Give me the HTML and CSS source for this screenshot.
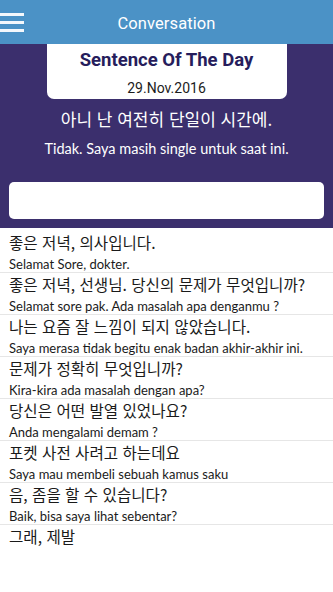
FILE: index.html
```html
<!DOCTYPE html>
<html lang="ko">
<head>
<meta charset="utf-8">
<title>Conversation</title>
<link rel="stylesheet" href="styles.css">
</head>
<body>
<header class="appbar">
  <button class="menu" aria-label="Menu"><span></span><span></span><span></span></button>
  <h1 class="title">Conversation</h1>
</header>
<section class="hero">
  <div class="card">
    <div class="card-title">Sentence Of The Day</div>
    <div class="card-date">29.Nov.2016</div>
  </div>
  <p class="hero-ko">아니 난 여전히 단일이 시간에.</p>
  <p class="hero-id">Tidak. Saya masih single untuk saat ini.</p>
  <div class="input"></div>
</section>
<ul class="list">
  <li class="row"><div class="ko">좋은 저녁, 의사입니다.</div><div class="id">Selamat Sore, dokter.</div></li>
  <li class="row"><div class="ko">좋은 저녁, 선생님. 당신의 문제가 무엇입니까?</div><div class="id">Selamat sore pak. Ada masalah apa denganmu ?</div></li>
  <li class="row"><div class="ko">나는 요즘 잘 느낌이 되지 않았습니다.</div><div class="id">Saya merasa tidak begitu enak badan akhir-akhir ini.</div></li>
  <li class="row"><div class="ko">문제가 정확히 무엇입니까?</div><div class="id">Kira-kira ada masalah dengan apa?</div></li>
  <li class="row"><div class="ko">당신은 어떤 발열 있었나요?</div><div class="id">Anda mengalami demam ?</div></li>
  <li class="row"><div class="ko">포켓 사전 사려고 하는데요</div><div class="id">Saya mau membeli sebuah kamus saku</div></li>
  <li class="row"><div class="ko">음, 좀을 할 수 있습니다?</div><div class="id">Baik, bisa saya lihat sebentar?</div></li>
  <li class="row last"><div class="ko">그래, 제발</div></li>
</ul>
</body>
</html>
```
FILE: styles.css
```css
* { box-sizing: border-box; }
html, body { margin: 0; padding: 0; }
body {
  width: 333px;
  height: 592px;
  overflow: hidden;
  background: #ffffff;
  font-family: "Noto Sans CJK KR", sans-serif;
}
.appbar {
  position: relative;
  height: 44px;
  background: #4b92c6;
  display: flex;
  align-items: center;
  justify-content: center;
}
.menu {
  position: absolute;
  left: 0;
  top: 13px;
  width: 24px;
  height: 19px;
  padding: 0;
  border: 0;
  background: none;
  display: flex;
  flex-direction: column;
  justify-content: space-between;
}
.menu span {
  display: block;
  width: 24px;
  height: 3px;
  background: #f4f8fc;
}
.title {
  margin: 0 0 -2px;
  font-family: Roboto, sans-serif;
  font-weight: 400;
  font-size: 16.5px;
  color: #ffffff;
  letter-spacing: 0.1px;
}
.hero {
  background: #3b2f6d;
  height: 184px;
  padding: 0 9px;
  display: flex;
  flex-direction: column;
  align-items: center;
}
.card {
  width: 240px;
  height: 55px;
  background: #ffffff;
  border-radius: 0 0 7px 7px;
  display: flex;
  flex-direction: column;
  align-items: center;
  padding-top: 5px;
}
.card-title {
  font-family: Roboto, sans-serif;
  font-weight: 700;
  font-size: 18.5px;
  line-height: 22px;
  color: #261d5c;
}
.card-date {
  font-family: Roboto, sans-serif;
  font-size: 14px;
  line-height: 16px;
  margin-top: 9px;
  color: #1c1c1c;
}
.hero-ko {
  margin: 9px 0 0;
  font-size: 17px;
  line-height: 22px;
  color: #ffffff;
}
.hero-id {
  margin: 10px 0 0;
  font-family: Lato, sans-serif;
  font-size: 14.5px;
  line-height: 18px;
  color: #ffffff;
}
.input {
  margin-top: 24px;
  width: 315px;
  height: 37px;
  background: #ffffff;
  border-radius: 5px;
}
.list {
  list-style: none;
  margin: 0;
  padding: 3px 0 0;
}
.row {
  padding: 0 9px;
  border-bottom: 1px solid #e6e6e6;
  height: 42px;
}
.row.last { border-bottom: 0; }
.ko {
  font-size: 15.6px;
  line-height: 22px;
  color: #1a1a1a;
  white-space: nowrap;
}
.id {
  margin-top: 3px;
  font-family: Lato, sans-serif;
  font-size: 13px;
  line-height: 16px;
  color: #1a1a1a;
  white-space: nowrap;
}
```
